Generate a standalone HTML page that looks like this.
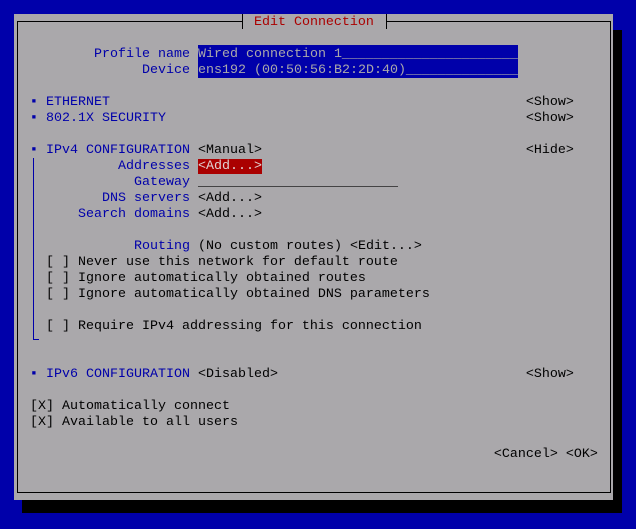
<!DOCTYPE html>
<html><head><style>
html,body{margin:0;padding:0;width:636px;height:529px;background:#0000aa;overflow:hidden}
.p{position:absolute}
pre{position:absolute;left:14px;top:15px;margin:0;font-family:"Liberation Mono",monospace;font-size:13.333px;line-height:16px;color:#000;white-space:pre}
.b{color:#0000aa}.r{color:#aa0000}
.hl{background:#0000aa;color:#aaa8ab}
.rd{background:#aa0000;color:#e0d0d0}
</style></head><body>
<div class="p" style="left:22px;top:30px;width:600px;height:483px;background:#000"></div>
<div class="p" style="left:14px;top:14px;width:599px;height:486px;background:#aaa8ab"></div>
<div class="p" style="left:17px;top:21px;width:592px;height:470px;border:1px solid #000"></div>
<div class="p" style="left:242px;top:14px;width:143px;height:15px;border-left:1px solid #000;border-right:1px solid #000;background:#aaa8ab"></div>
<div class="p" style="left:33px;top:158px;width:5px;height:181px;border-left:1px solid #0000aa;border-bottom:1px solid #0000aa"></div>
<div class="p" style="left:198px;top:45px;width:320px;height:33px;background:#0000aa"></div>
<pre>                              <span class="r">Edit Connection</span>

          <span class="b">Profile name</span> <span class="hl">Wired connection 1______________________</span>
                <span class="b">Device</span> <span class="hl">ens192 (00:50:56:B2:2D:40)______________</span>

  <span class="b">▪ ETHERNET</span>                                                    &lt;Show&gt;
  <span class="b">▪ 802.1X SECURITY</span>                                             &lt;Show&gt;

  <span class="b">▪ IPv4 CONFIGURATION</span> &lt;Manual&gt;                                 &lt;Hide&gt;
             <span class="b">Addresses</span> <span class="rd">&lt;Add...&gt;</span>
               <span class="b">Gateway</span> _________________________
           <span class="b">DNS servers</span> &lt;Add...&gt;
        <span class="b">Search domains</span> &lt;Add...&gt;

               <span class="b">Routing</span> (No custom routes) &lt;Edit...&gt;
    [ ] Never use this network for default route
    [ ] Ignore automatically obtained routes
    [ ] Ignore automatically obtained DNS parameters

    [ ] Require IPv4 addressing for this connection


  <span class="b">▪ IPv6 CONFIGURATION</span> &lt;Disabled&gt;                               &lt;Show&gt;

  [X] Automatically connect
  [X] Available to all users

                                                            &lt;Cancel&gt; &lt;OK&gt;
</pre>
</body></html>
